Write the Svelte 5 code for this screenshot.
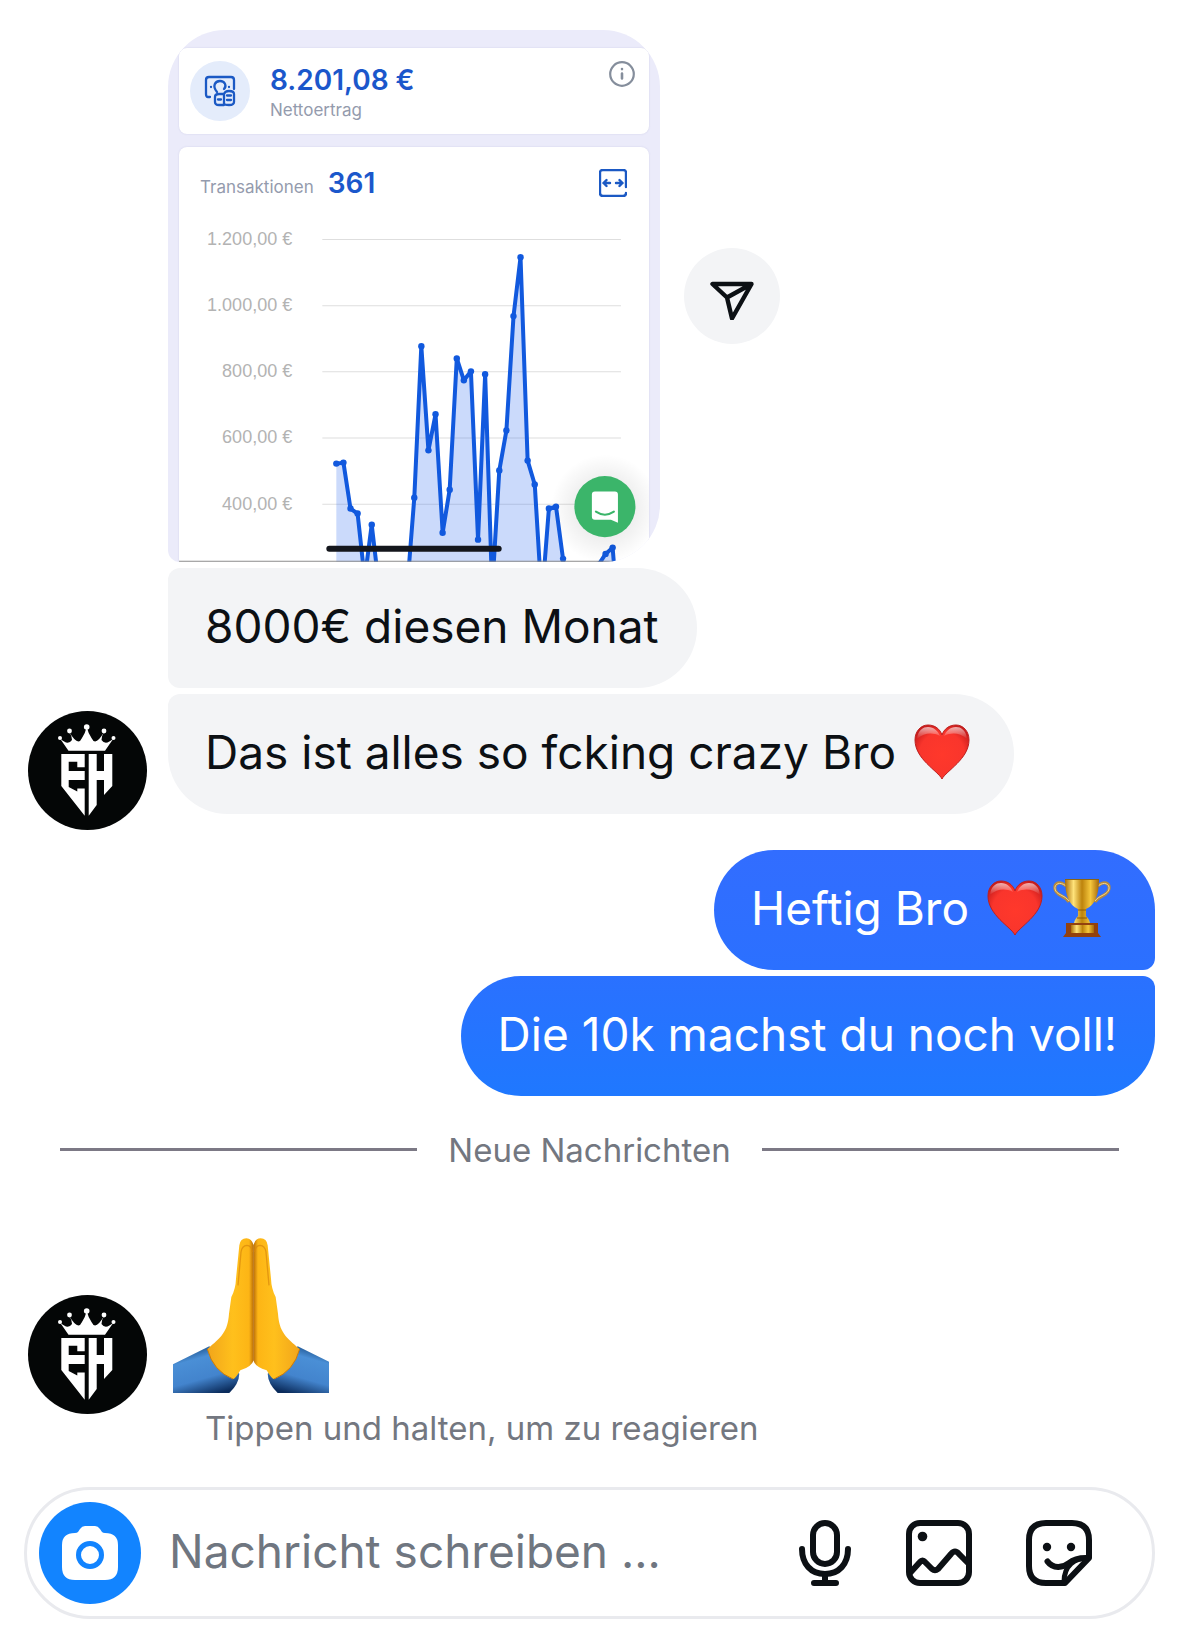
<script>
    const labels = ["1.200,00 €", "1.000,00 €", "800,00 €", "600,00 €", "400,00 €"];
    const values = [
        518, 521, 382, 367, 170, 333, 150, 0, 0, 0,
        140, 415, 873, 558, 667, 309, 439, 836, 770, 797,
        288, 788, 136, 497, 618, 964, 1142, 527, 455, 106,
        382, 388, 230, 0, 0, 0, 0, 212, 245, 264, 0
    ];
    let draft = "";

    // 66 units of height for every 200 €
    const points = values.map((v, i) => ({ x: 157 + i * 7.07, y: 29 + (1200 - v) * 0.33 }));
    const line = points.map((p) => `${p.x.toFixed(1)},${p.y.toFixed(1)}`).join(" ");
    const area = `157,430 ${line} ${points[points.length - 1].x},430`;
</script>

{#snippet avatar()}
    <svg class="avatar" viewBox="0 0 119 119" role="img" aria-label="Profilbild">
        <circle cx="59.500" cy="59.500" r="59.500" fill="#040606" />
        <g fill="#fff">
            <circle cx="32" cy="27" r="2" />
            <circle cx="41.500" cy="20" r="2.400" />
            <circle cx="58.700" cy="16" r="2.800" />
            <circle cx="76" cy="20" r="2.400" />
            <circle cx="85.500" cy="27" r="2" />
            <path d="M40.500 39.700 32 27.500Q40 35 44 29 44 25 41.300 21 50 36 54 27 57 23 58.700 16 60.500 23 63.500 27 67.500 36 76 21 73.500 25 73.500 29 77.500 35 85.500 27.500L77 39.700Z" />
            <path d="M33.300 43H56.700V56.300H49.300V50.700H40.700V60H56.700V69H40.700V76L49.300 80.500V77.500H56.700V104.700L33.300 75Z" />
            <path d="M60.700 43H68.700V60H76V43H84.300V75L76 84V69H68.700V94L60.700 104.700Z" />
        </g>
    </svg>
{/snippet}

{#snippet heart()}
    <svg class="emoji" viewBox="0 0 56 56" role="img" aria-label="Rotes Herz">
        <defs>
            <radialGradient id="red" cx=".5" cy=".55" r=".6">
                <stop offset="0" stop-color="#ff382b" />
                <stop offset=".7" stop-color="#f9352c" />
                <stop offset="1" stop-color="#c91d1d" />
            </radialGradient>
            <linearGradient id="shine" x2="0" y2="1">
                <stop offset="0" stop-color="#fff" stop-opacity=".65" />
                <stop offset="1" stop-color="#fff" stop-opacity="0" />
            </linearGradient>
        </defs>
        <path d="M28 55C24 47 1 35 1 16 1 7 7 1 14 1 21 1 26 5 28 11 30 5 35 1 42 1 49 1 55 7 55 16 55 35 32 47 28 55Z" fill="url(#red)" stroke="#bd201f" />
        <path d="M3 15C4 6 9 3 14 3 20 3 24 7 26 12 18 8 10 9 3 15ZM53 15C52 6 47 3 42 3 36 3 32 7 30 12 38 8 46 9 53 15Z" fill="url(#shine)" />
    </svg>
{/snippet}

<main>
    <section class="group">
        {@render avatar()}
        <div class="received">
            <div class="shared">
                <article class="stats">
                    <div class="card income">
                        <svg class="money" viewBox="0 0 60 60" aria-hidden="true">
                            <circle cx="30" cy="30" r="30" fill="#e4ecfb" />
                            <g fill="none" stroke="#1b59c4" stroke-width="2.300" stroke-linecap="round" stroke-linejoin="round">
                                <path d="M20 36H18Q16 36 16 33V19Q16 16 19 16H41Q44 16 44 19V28M27 31C22 25 25 20 30 20 35 20 37 25 34 28M21 26V26.100M39 26V26.100" />
                                <path d="M25 36Q25 33 29 33H34V44H29Q25 44 25 41ZM34 33Q35 30 39 30 44 30 44 33V41Q44 44 39 44 35 44 34 43ZM28 38.500H31M37 34.500H41M37 39H41" />
                            </g>
                        </svg>
                        <div class="amount">
                            <strong>8.201,08 €</strong>
                            <span>Nettoertrag</span>
                        </div>
                        <svg class="info" viewBox="0 0 26 26" aria-hidden="true">
                            <circle cx="13" cy="13" r="11.800" fill="none" stroke="#858e9c" stroke-width="2.200" />
                            <path d="M13 12.500V17.500M13 8V8.100" stroke="#858e9c" stroke-width="2.600" stroke-linecap="round" />
                        </svg>
                    </div>
                    <div class="card chart">
                        <header>
                            <span>Transaktionen</span>
                            <strong>361</strong>
                            <svg class="expand" viewBox="0 0 28 28" aria-hidden="true">
                                <path d="M27 18V4Q27 1 24 1H4Q1 1 1 4V24Q1 27 4 27H24Q27 27 27 24M11 14H4.500M7.500 11 4.500 14 7.500 17M17 14H23.500M20.500 11 23.500 14 20.500 17" fill="none" stroke="#1b59c4" stroke-width="2.400" stroke-linecap="round" stroke-linejoin="round" />
                            </svg>
                        </header>
                        <svg class="plot" viewBox="0 0 469 352">
                            <defs>
                                <radialGradient id="glow">
                                    <stop offset=".5" stop-color="#000" stop-opacity=".07" />
                                    <stop offset="1" stop-color="#000" stop-opacity="0" />
                                </radialGradient>
                            </defs>
                            {#each labels as label, i}
                                <text class="axis" x="113" y={36 + i * 66} text-anchor="end">{label}</text>
                                <path d="M143 {30.5 + i * 66}H441" stroke="#dedede" />
                            {/each}
                            <polygon points={area} fill="#2f6df0" fill-opacity=".25" />
                            <polyline points={line} fill="none" stroke="#1159de" stroke-width="4" stroke-linejoin="round" />
                            {#each points as p}
                                <circle cx={p.x} cy={p.y} r="3.200" fill="#1159de" />
                            {/each}
                            <path d="M0 351.500H433" stroke="#8b8b8b" />
                            <path d="M150 339H319" stroke="#14161c" stroke-width="6" stroke-linecap="round" />
                            <circle cx="425" cy="299" r="54" fill="url(#glow)" />
                            <circle cx="425" cy="297" r="30.500" fill="#3bb56a" />
                            <path d="M415 282H435Q438 282 438 285V313L431 310H415Q412 310 412 307V285Q412 282 415 282Z" fill="#fff" />
                            <path d="M416 302Q425 308 434 302" fill="none" stroke="#3bb56a" stroke-width="2" stroke-linecap="round" />
                        </svg>
                    </div>
                </article>
                <button class="send" aria-label="Weiterleiten">
                    <svg viewBox="0 0 48 48">
                        <path d="M4.500 12H43.500L24 46.500 19 25.500ZM19 25.500 43.500 12" fill="none" stroke="#0c1014" stroke-width="4.400" stroke-linejoin="round" />
                    </svg>
                </button>
            </div>
            <p class="bubble first">8000€ diesen Monat</p>
            <p class="bubble last"><span>Das ist alles so fcking crazy Bro</span> {@render heart()}</p>
        </div>
    </section>

    <section class="sent">
        <p class="bubble first">
            <span>Heftig Bro</span> {@render heart()}
            <svg class="emoji cup" viewBox="0 0 58 60" role="img" aria-label="Pokal">
                <defs>
                    <linearGradient id="gold">
                        <stop offset="0" stop-color="#a96c08" />
                        <stop offset=".25" stop-color="#ffe37a" />
                        <stop offset=".5" stop-color="#bd830c" />
                        <stop offset=".75" stop-color="#f5c73d" />
                        <stop offset="1" stop-color="#a5680a" />
                    </linearGradient>
                </defs>
                <path d="M13 8C7 2 1 5 2 11 3 18 12 17 16 24M45 8C51 2 57 5 56 11 55 18 46 17 42 24" fill="none" stroke="#b78a3c" stroke-width="3" />
                <path d="M13 8C7 3 1 6 2 11 3 17 12 17 16 23M45 8C51 3 57 6 56 11 55 17 46 17 42 23" fill="none" stroke="#efd493" />
                <path d="M12 1H46C46 17 42 27 33 31V38Q37 42 37 46H21Q21 42 25 38V31C16 27 12 17 12 1Z" fill="url(#gold)" />
                <path d="M12 1.500H46" stroke="#8b6411" />
                <path d="M25 32H33M24 40H34" stroke="#8e5a08" />
                <path d="M13 45H45V55L48 59H10L13 55Z" fill="#93410e" />
                <path d="M18 47H41V55H18Z" fill="url(#gold)" />
            </svg>
        </p>
        <p class="bubble last">Die 10k machst du noch voll!</p>
    </section>

    <div class="divider"><span>Neue Nachrichten</span></div>

    <section class="group reaction">
        {@render avatar()}
        <svg class="pray" viewBox="0 0 468 468" role="img" aria-label="Gefaltete Hände">
            <defs>
                <linearGradient id="skin">
                    <stop offset="0" stop-color="#f1a51b" />
                    <stop offset=".55" stop-color="#ffc01c" />
                    <stop offset=".9" stop-color="#fdb515" />
                    <stop offset="1" stop-color="#b86c08" />
                </linearGradient>
                <linearGradient id="sleeve" x1=".3" x2=".7" y2="1">
                    <stop offset="0" stop-color="#164880" />
                    <stop offset=".25" stop-color="#4a8fd6" />
                    <stop offset=".65" stop-color="#4384cd" />
                    <stop offset="1" stop-color="#0b2c5c" />
                </linearGradient>
                <g id="hand">
                    <path d="M0 382 109 328 199 410Q198 440 169 468H0Z" fill="url(#sleeve)" />
                    <path d="M242 370V25Q236 4 220 4 202 4 199 25L189 125Q188 155 175 180L168 230C164 285 145 300 103 336Q120 402 180 426 187 426 202 400 236 390 242 370Z" fill="url(#skin)" />
                    <path d="M204 45Q207 26 222 25 236 26 238 45M204 45 195 145" fill="none" stroke="#d8870c" stroke-width="4" stroke-opacity=".7" />
                    <path d="M103 336Q120 402 180 426" fill="none" stroke="#c97a0b" stroke-width="3" />
                </g>
            </defs>
            <use href="#hand" />
            <use href="#hand" transform="translate(483) scale(-1 1)" />
        </svg>
    </section>
    <p class="hint">Tippen und halten, um zu reagieren</p>

    <form class="composer" on:submit|preventDefault>
        <button type="button" class="camera" aria-label="Kamera">
            <svg viewBox="0 0 56 54">
                <path d="M18 3Q20 0 23 0H33Q36 0 38 3L40 6Q41 7 43 7 56 7 56 19V41Q56 54 43 54H13Q0 54 0 41V19Q0 7 13 7 15 7 16 6Z" fill="#fff" />
                <circle cx="28" cy="29" r="11.500" fill="#fff" stroke="#1284ff" stroke-width="5" />
            </svg>
        </button>
        <input type="text" bind:value={draft} placeholder="Nachricht schreiben ..." aria-label="Nachricht schreiben" />
        <button type="button" aria-label="Sprachnachricht">
            <svg class="mic" viewBox="0 0 54 66">
                <g fill="none" stroke="#0c1014" stroke-width="6" stroke-linecap="round">
                    <rect x="15" y="3" width="24" height="41" rx="12" />
                    <path d="M4 29C4 44 13 54 27 54S50 44 50 29M27 55V62M16 63H38" />
                </g>
            </svg>
        </button>
        <button type="button" aria-label="Bild">
            <svg class="icon" viewBox="0 0 66 66">
                <g fill="none" stroke="#0c1014" stroke-width="6" stroke-linejoin="round">
                    <rect x="3" y="3" width="60" height="60" rx="11" />
                    <path d="M4 53 14 42Q16.500 39 19 42L26 49Q29 51.500 32 49L45 34Q49 29 53 34L62 43" />
                </g>
                <circle cx="16.500" cy="16.500" r="4.800" fill="#0c1014" />
            </svg>
        </button>
        <button type="button" aria-label="Sticker">
            <svg class="icon" viewBox="0 0 66 66">
                <g fill="none" stroke="#0c1014" stroke-width="6" stroke-linejoin="round" stroke-linecap="round">
                    <path d="M63 38V20Q63 3 46 3H20Q3 3 3 20V46Q3 63 20 63H39Z" />
                    <path d="M62 38C49 38 38 45 38 62" stroke-width="5" />
                    <path d="M21.500 41.500C27 49 37 48 43 43Q49 38 60 38" />
                </g>
                <circle cx="21" cy="27" r="4.200" fill="#0c1014" />
                <circle cx="45" cy="27" r="4.200" fill="#0c1014" />
            </svg>
        </button>
    </form>
</main>

<style>
    :global(body){
        margin: 0;
        background: #fff;
    }
    main{
        padding: 30px 24px 8px;
        font-family: Inter, "Liberation Sans", sans-serif;
        color: #0c1014;
    }
    svg{display: block;}
    p{margin: 0;}
    button{
        flex: none;
        display: flex;
        align-items: center;
        justify-content: center;
        padding: 0;
        border: none;
        background: none;
        cursor: pointer;
    }
    .group{
        display: flex;
        align-items: flex-end;
        gap: 21px;
        padding-left: 4px;
    }
    .avatar{
        flex: none;
        width: 119px;
        height: 119px;
    }
    .received{
        display: flex;
        flex-direction: column;
        align-items: flex-start;
        gap: 6px;
        padding-bottom: 16px;
    }
    .shared{
        display: flex;
        align-items: center;
        gap: 24px;
    }
    .stats{
        display: flex;
        flex-direction: column;
        gap: 13px;
        width: 492px;
        padding: 18px 11px 0;
        box-sizing: border-box;
        background: #ebebfa;
        border-radius: 57px 57px 57px 12px;
        overflow: hidden;
    }
    .card{
        background: #fff;
        border-radius: 8px;
        box-shadow: 0 0 2px #cfcfe8;
    }
    .income{
        display: flex;
        align-items: flex-start;
        gap: 20px;
        padding: 13px 14px 13px 11px;
    }
    .money{
        width: 60px;
        height: 60px;
    }
    .amount{
        flex: 1;
        display: flex;
        flex-direction: column;
    }
    strong{
        font-size: 28px;
        line-height: 38px;
        font-weight: 600;
        color: #1b57cb;
    }
    .amount span, header span{
        font-size: 17px;
        line-height: 22px;
        color: #949bad;
    }
    .info{
        width: 26px;
        height: 26px;
    }
    .chart{border-radius: 8px 8px 0 0;}
    header{
        display: flex;
        align-items: baseline;
        gap: 14px;
        padding: 17px 22px 7px 21px;
    }
    .expand{
        align-self: center;
        width: 28px;
        height: 28px;
        margin-left: auto;
    }
    .plot{width: 100%;}
    .axis{
        font: 18px "Liberation Sans", Arial, sans-serif;
        fill: #b3b3b3;
    }
    .send{
        width: 96px;
        height: 96px;
        border-radius: 50%;
        background: #f3f4f6;
    }
    .send svg{
        width: 48px;
        height: 48px;
    }
    .bubble{
        display: flex;
        align-items: center;
        gap: 10px;
        padding: 28px 38px 32px 37px;
        font-size: 46px;
        line-height: 60px;
        background: #f3f4f6;
        border-radius: 12px 60px 60px 12px;
    }
    .bubble span{margin-right: 8px;}
    .received .last{border-bottom-left-radius: 60px;}
    .emoji{
        width: 56px;
        height: 56px;
    }
    .emoji:last-child{margin-right: 6px;}
    .cup{
        width: 58px;
        height: 60px;
    }
    .sent{
        display: flex;
        flex-direction: column;
        align-items: flex-end;
        gap: 6px;
        margin-top: 20px;
    }
    .sent .bubble{
        color: #fff;
        background: linear-gradient(#326dff, #2b70ff);
        border-radius: 60px 60px 12px 60px;
    }
    .sent .last{
        background: linear-gradient(#2a71ff, #1f78ff);
        border-radius: 60px 12px 60px 60px;
    }
    .divider{
        display: flex;
        align-items: center;
        gap: 31px;
        margin: 34px 36px 0;
        font-size: 33px;
        line-height: 40px;
        color: #737780;
    }
    .divider::before, .divider::after{
        content: "";
        flex: 1;
        height: 3px;
        background: #7c7985;
    }
    .reaction{
        gap: 26px;
        margin-top: 67px;
    }
    .pray{
        width: 156px;
        height: 156px;
        margin-bottom: 21px;
    }
    .hint{
        padding-left: 181px;
        margin-bottom: 45px;
        font-size: 33px;
        line-height: 28px;
        color: #737780;
    }
    .composer{
        display: flex;
        align-items: center;
        gap: 54px;
        padding: 12px 60px 12px 12px;
        border: 3px solid #e9eaee;
        border-radius: 66px;
    }
    .camera{
        width: 102px;
        height: 102px;
        margin-right: -26px;
        border-radius: 50%;
        background: #1284ff;
    }
    .camera svg{
        width: 56px;
        height: 54px;
    }
    input{
        flex: 1;
        min-width: 0;
        padding: 0 0 4px;
        border: none;
        outline: none;
        background: none;
        font: 46px/60px Inter, "Liberation Sans", sans-serif;
        color: #0c1014;
    }
    input::placeholder{
        color: #6f7680;
        opacity: 1;
    }
    .mic{
        width: 54px;
        height: 66px;
    }
    .icon{
        width: 66px;
        height: 66px;
    }
</style>
